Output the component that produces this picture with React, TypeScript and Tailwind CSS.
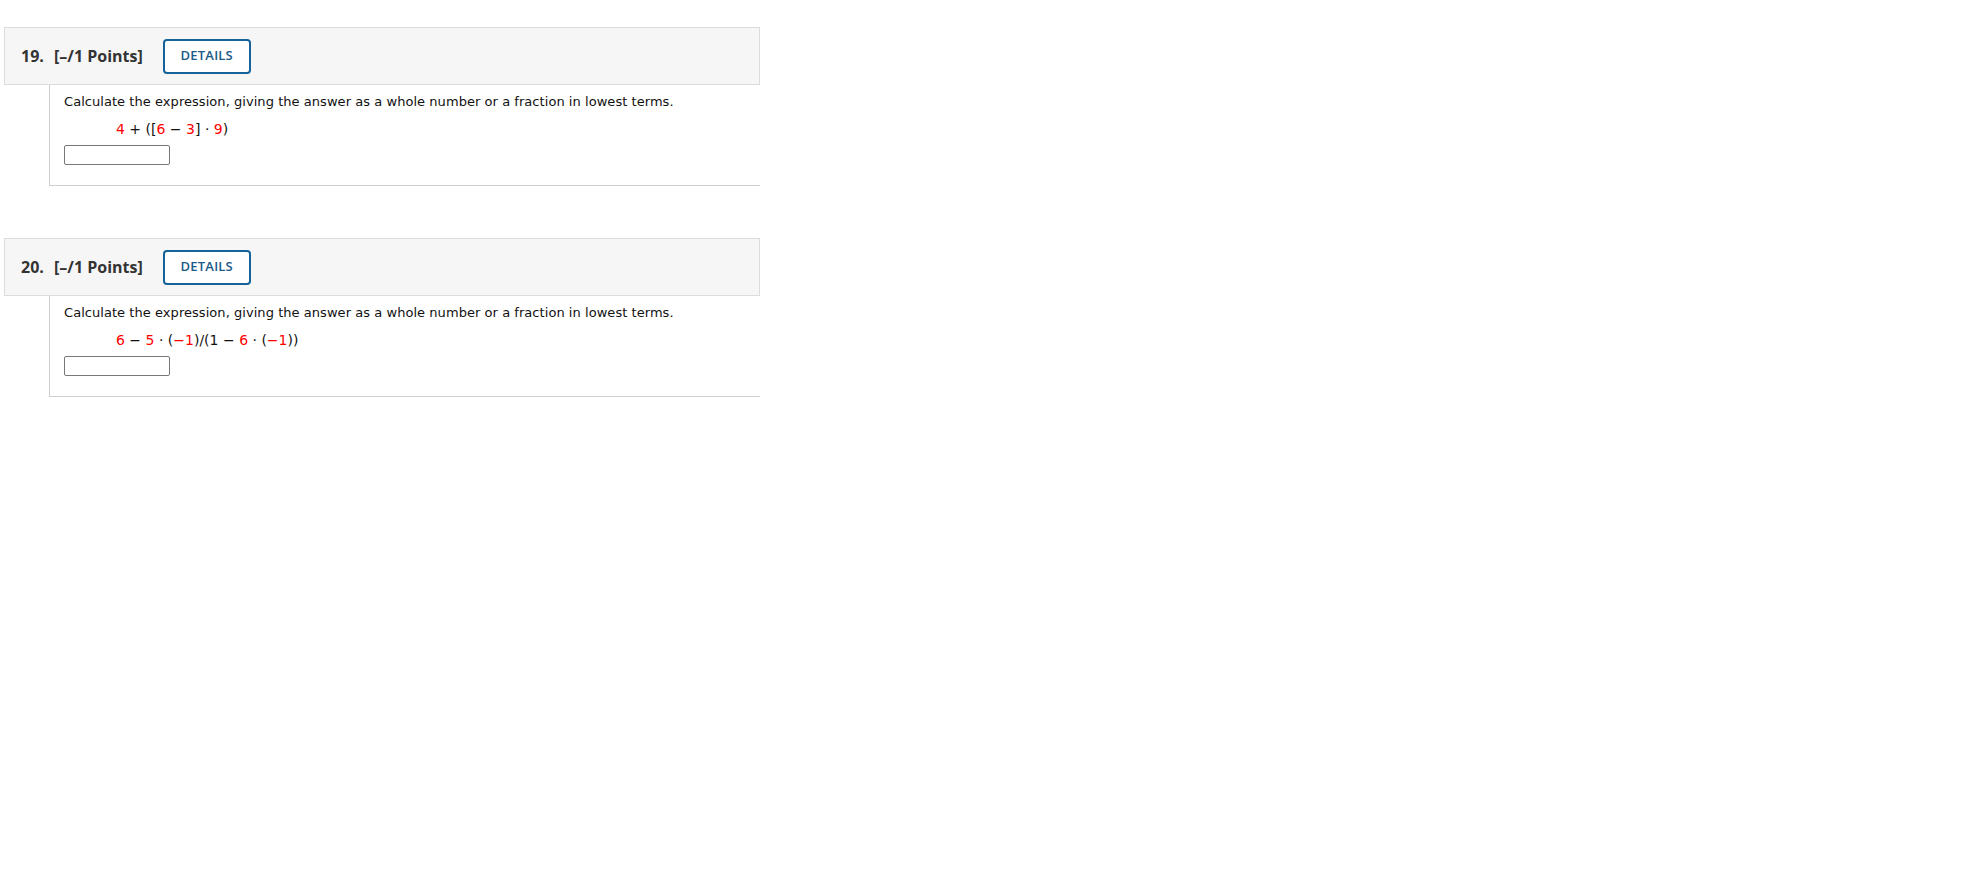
import React from "react";

const R = ({ children }: { children: React.ReactNode }) => (
  <span className="text-[#ff0000]">{children}</span>
);

function Question({
  num,
  expr,
  first,
}: {
  num: string;
  expr: React.ReactNode;
  first?: boolean;
}) {
  return (
    <div className={first ? "" : "mt-[52px]"}>
      <div className="h-[58px] border border-[#dcdcdc] bg-[#f6f6f6] flex items-center pl-[16px] text-[#333333] font-bold text-[16px] [font-family:'Open_Sans',sans-serif]">
        <span className="w-[33px]">{num}</span>
        <span>[–/1 Points]</span>
        <button className="ml-[20px] w-[88px] h-[35px] rounded-[4px] border-2 border-[#15639a] bg-white text-[#1c5a87] text-[13px] font-semibold tracking-[0.2px] flex items-center justify-center">
          DETAILS
        </button>
      </div>
      <div className="ml-[45px] border-l border-b border-[#cfcfcf] pl-[14px] pt-[9px] pb-[20px] text-[13px] text-[#111111] [font-family:'DejaVu_Sans',Verdana,sans-serif]">
        <div className="leading-[16px] tracking-[0.05px]">
          Calculate the expression, giving the answer as a whole number or a fraction in lowest terms.
        </div>
        <div className="leading-[16px] mt-[11px] pl-[52px] text-[14px] text-[#111111]">{expr}</div>
        <div className="mt-[8px] w-[106px] h-[20px] border border-[#777777] rounded-[2px] bg-white" />
      </div>
    </div>
  );
}

export default function App() {
  return (
    <div className="min-h-[888px] w-full bg-white pt-[27px] pl-[4px]">
      <div className="w-[756px]">
        <Question
          first
          num="19."
          expr={
            <>
              <R>4</R> + ([<R>6</R> − <R>3</R>] · <R>9</R>)
            </>
          }
        />
        <Question
          num="20."
          expr={
            <>
              <R>6</R> − <R>5</R> · (<R>−1</R>)/(1 − <R>6</R> · (<R>−1</R>))
            </>
          }
        />
      </div>
    </div>
  );
}
